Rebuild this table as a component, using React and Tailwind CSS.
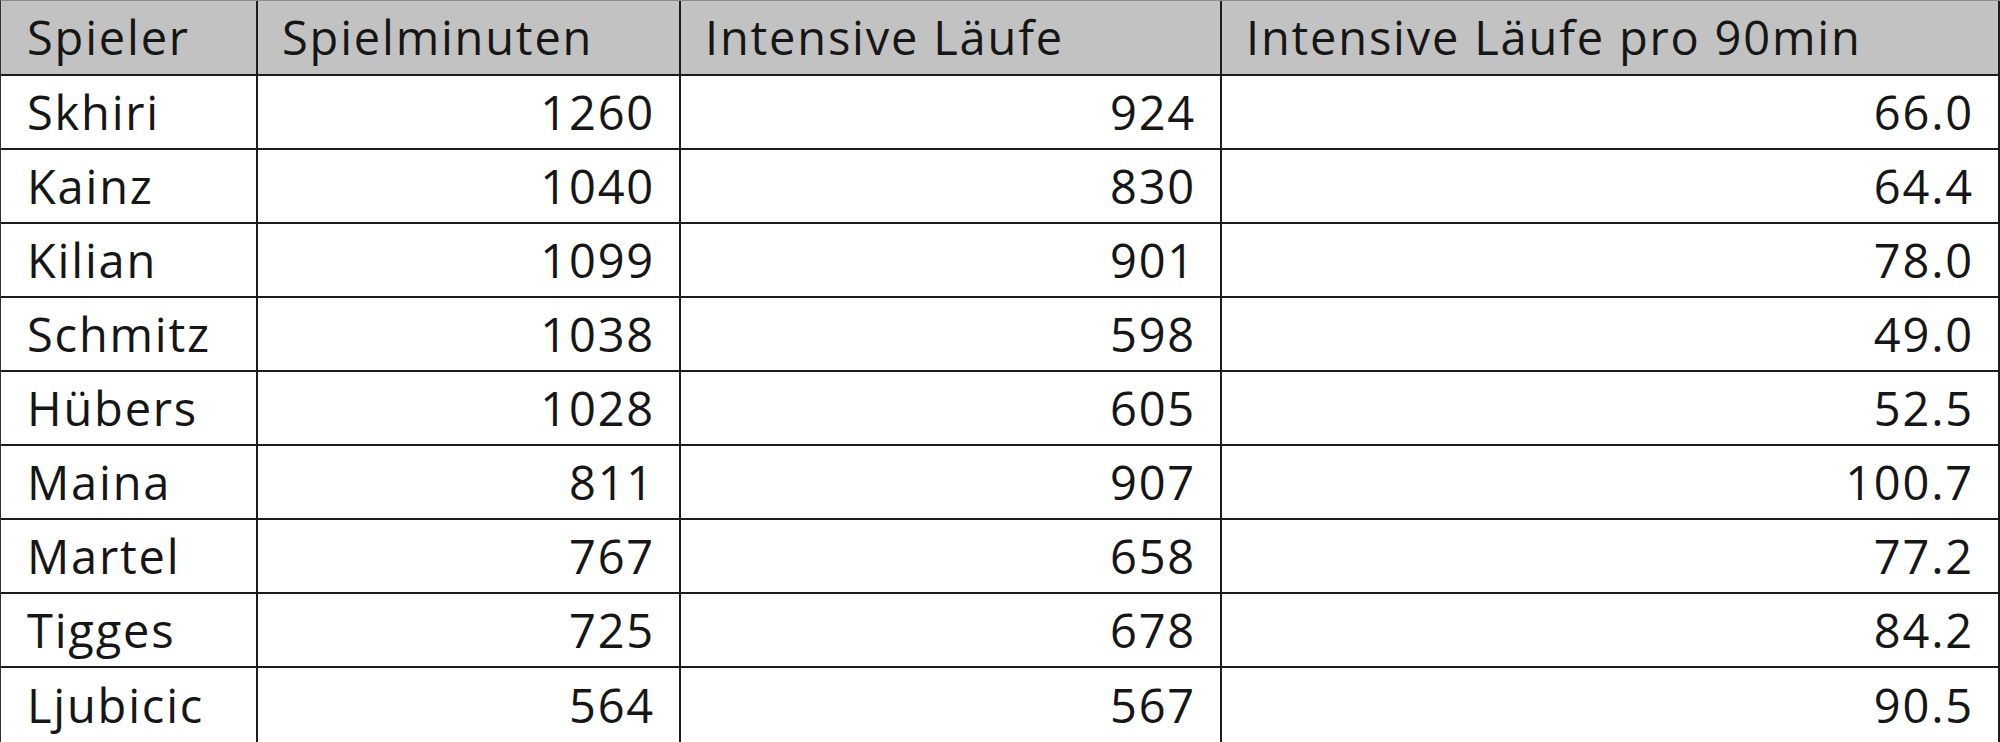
const rows = [
    ['Skhiri', '1260', '924', '66.0'],
    ['Kainz', '1040', '830', '64.4'],
    ['Kilian', '1099', '901', '78.0'],
    ['Schmitz', '1038', '598', '49.0'],
    ['Hübers', '1028', '605', '52.5'],
    ['Maina', '811', '907', '100.7'],
    ['Martel', '767', '658', '77.2'],
    ['Tigges', '725', '678', '84.2'],
    ['Ljubicic', '564', '567', '90.5'],
];

const headers = ['Spieler', 'Spielminuten', 'Intensive Läufe', 'Intensive Läufe pro 90min'];

const cols = 'grid grid-cols-[257px_423px_541px_1fr]';
const cell = 'flex items-center border-r-2 border-[#1c1c1c]';

export default function App() {
    return (
        <div className="h-[742px] w-[2000px] overflow-hidden bg-white text-[#161616] [font-family:'Open_Sans',sans-serif] text-[47px] leading-none tracking-[1.8px]">
            <div className="border-l border-t border-l-[#333] border-t-[#8c8c8c]">
                <div className={`${cols} h-[75px] border-b-2 border-[#1c1c1c] bg-[#c2c2c2]`}>
                    {headers.map((h) => (
                        <div key={h} className={`${cell} pl-[24px] first:pl-[26px]`}>
                            {h}
                        </div>
                    ))}
                </div>
                {rows.map((r, i) => (
                    <div
                        key={r[0]}
                        className={`${cols} h-[74px] ${i < rows.length - 1 ? 'border-b-2 border-[#1c1c1c]' : ''}`}
                    >
                        <div className={`${cell} pl-[26px]`}>{r[0]}</div>
                        <div className={`${cell} justify-end pr-[24px]`}>{r[1]}</div>
                        <div className={`${cell} justify-end pr-[24px]`}>{r[2]}</div>
                        <div className={`${cell} justify-end pr-[24px]`}>{r[3]}</div>
                    </div>
                ))}
            </div>
        </div>
    );
}
